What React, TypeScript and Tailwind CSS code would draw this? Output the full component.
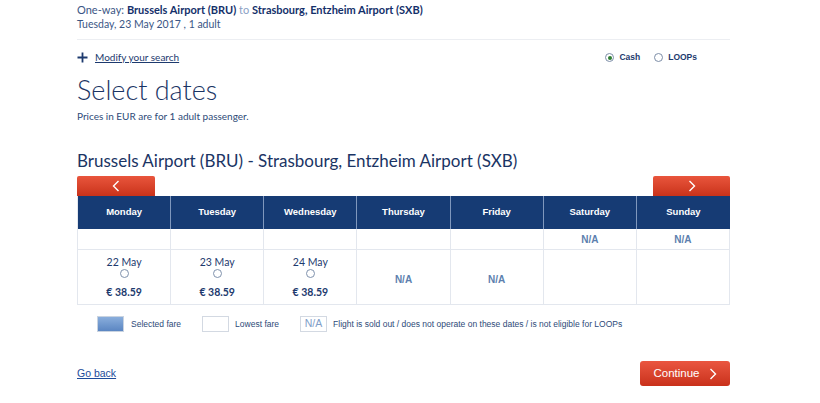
import React from "react";

const days = ["Monday", "Tuesday", "Wednesday", "Thursday", "Friday", "Saturday", "Sunday"];
const row1 = ["", "", "", "", "", "N/A", "N/A"];
const row2: ({ date: string; price: string } | "N/A" | "")[] = [
  { date: "22 May", price: "€ 38.59" },
  { date: "23 May", price: "€ 38.59" },
  { date: "24 May", price: "€ 38.59" },
  "N/A",
  "N/A",
  "",
  "",
];

const Chevron = ({ dir, className }: { dir: "left" | "right"; className?: string }) => (
  <svg width="8" height="12" viewBox="0 0 8 12" className={className}>
    <path
      d={dir === "left" ? "M6.5 1 L1.5 6 L6.5 11" : "M1.5 1 L6.5 6 L1.5 11"}
      fill="none"
      stroke="white"
      strokeWidth="1.4"
    />
  </svg>
);

const lato = { fontFamily: "Lato, sans-serif" };
const sans = { fontFamily: "'Liberation Sans', Arial, sans-serif" };

export default function App() {
  return (
    <div className="min-h-[403px] w-[820px] bg-white" style={sans}>
      <div className="ml-[77px] w-[653px]">
        {/* Top summary */}
        <div className="pt-[3px] pb-[8px] border-b border-[#eceef2]">
          <div className="text-[11px] leading-[14px] text-[#3a5685]" style={lato}>
            One-way: <span className="font-bold text-[#14306a]">Brussels Airport (BRU)</span>{" "}
            <span className="text-[#8aa0c4]">to</span>{" "}
            <span className="font-bold text-[#14306a]">Strasbourg, Entzheim Airport (SXB)</span>
          </div>
          <div className="text-[10.5px] leading-[14px] text-[#3a5685]" style={lato}>
            Tuesday, 23 May 2017 , 1 adult
          </div>
        </div>

        {/* Modify + currency */}
        <div className="flex items-center justify-between h-[35px]">
          <div className="flex items-center gap-[7px]">
            <svg width="11" height="11" viewBox="0 0 11 11">
              <path d="M5.5 0.5 V10.5 M0.5 5.5 H10.5" stroke="#1d3a6e" strokeWidth="1.8" />
            </svg>
            <span className="text-[10px] text-[#1d3a6e] underline" style={lato}>
              Modify your search
            </span>
          </div>
          <div className="flex items-center mr-[33px] text-[8.5px] font-bold text-[#1d3a6e]" style={sans}>
            <span className="w-[9px] h-[9px] rounded-full border border-[#7d8ea8] flex items-center justify-center mr-[5px]">
              <span className="w-[4px] h-[4px] rounded-full bg-[#2e7d32]" />
            </span>
            <span className="mr-[14px]">Cash</span>
            <span className="w-[9px] h-[9px] rounded-full border border-[#7d8ea8] mr-[5px]" />
            <span>LOOPs</span>
          </div>
        </div>

        {/* Heading */}
        <div className="text-[27px] leading-[32px] text-[#1a3464] font-light -mt-[1px]" style={lato}>
          Select dates
        </div>
        <div className="text-[10px] leading-[14px] text-[#2d4a78] mt-[3px]" style={lato}>
          Prices in EUR are for 1 adult passenger.
        </div>

        <div className="text-[17px] leading-[20px] text-[#1a3464] mt-[28px]" style={lato}>
          Brussels Airport (BRU) - Strasbourg, Entzheim Airport (SXB)
        </div>

        {/* Nav buttons */}
        <div className="flex justify-between mt-[5px]">
          <div className="w-[78px] h-[20px] rounded-t-[2px] bg-gradient-to-b from-[#e9553c] to-[#c93219] flex items-center justify-center">
            <Chevron dir="left" />
          </div>
          <div className="w-[77px] h-[20px] rounded-t-[2px] bg-gradient-to-b from-[#e9553c] to-[#c93219] flex items-center justify-center">
            <Chevron dir="right" />
          </div>
        </div>

        {/* Table */}
        <div className="grid grid-cols-7 border-l border-[#e3e7ee]">
          {days.map((d, i) => (
            <div
              key={d}
              className={`h-[33px] bg-[#163b74] flex items-center justify-center text-[9.5px] font-bold text-white ${i < 6 ? "border-r border-[#7f97bd]" : ""}`}
              style={sans}
            >
              {d}
            </div>
          ))}
          {row1.map((v, i) => (
            <div
              key={"r1" + i}
              className="h-[21px] border-r border-b border-[#e3e7ee] flex items-center justify-center text-[10px] font-bold text-[#5d7fae]"
              style={sans}
            >
              {v}
            </div>
          ))}
          {row2.map((v, i) => (
            <div
              key={"r2" + i}
              className="h-[55px] border-r border-b border-[#e3e7ee] flex flex-col items-center justify-center"
              style={lato}
            >
              {typeof v === "object" ? (
                <>
                  <div className="text-[10.5px] leading-[12px] text-[#1d3a6e]">{v.date}</div>
                  <div className="w-[9px] h-[9px] rounded-full border border-[#8092ad] mt-[1px]" />
                  <div className="text-[10.5px] leading-[12px] font-bold text-[#1d3a6e] mt-[8px]">{v.price}</div>
                </>
              ) : (
                <div className="text-[10px] font-bold text-[#5d7fae] mt-[4px]" style={sans}>{v}</div>
              )}
            </div>
          ))}
        </div>

        {/* Legend */}
        <div className="flex items-center mt-[11px] pl-[20px] text-[8.5px] text-[#2d4a78]" style={sans}>
          <div className="w-[27px] h-[16px] border border-[#c9d3e0] bg-gradient-to-b from-[#8aaedc] to-[#5b86c2]" />
          <span className="ml-[7px]">Selected fare</span>
          <div className="w-[27px] h-[16px] border border-[#d3d9e2] bg-white ml-[21px]" />
          <span className="ml-[6px]">Lowest fare</span>
          <div className="w-[27px] h-[16px] border border-[#d3d9e2] bg-white ml-[21px] flex items-center justify-center text-[10.5px] text-[#7e9dc8]">
            N/A
          </div>
          <span className="ml-[6px]">Flight is sold out / does not operate on these dates / is not eligible for LOOPs</span>
        </div>

        {/* Footer */}
        <div className="flex items-center justify-between mt-[29px]">
          <span className="text-[10.5px] text-[#1d4b9a] underline" style={sans}>
            Go back
          </span>
          <div className="w-[90px] h-[25px] rounded-[3px] bg-gradient-to-b from-[#ea5640] to-[#c9301a] flex items-center justify-center gap-[9px] text-[11.5px] text-white" style={sans}>
            <span>Continue</span>
            <Chevron dir="right" />
          </div>
        </div>
      </div>
    </div>
  );
}
